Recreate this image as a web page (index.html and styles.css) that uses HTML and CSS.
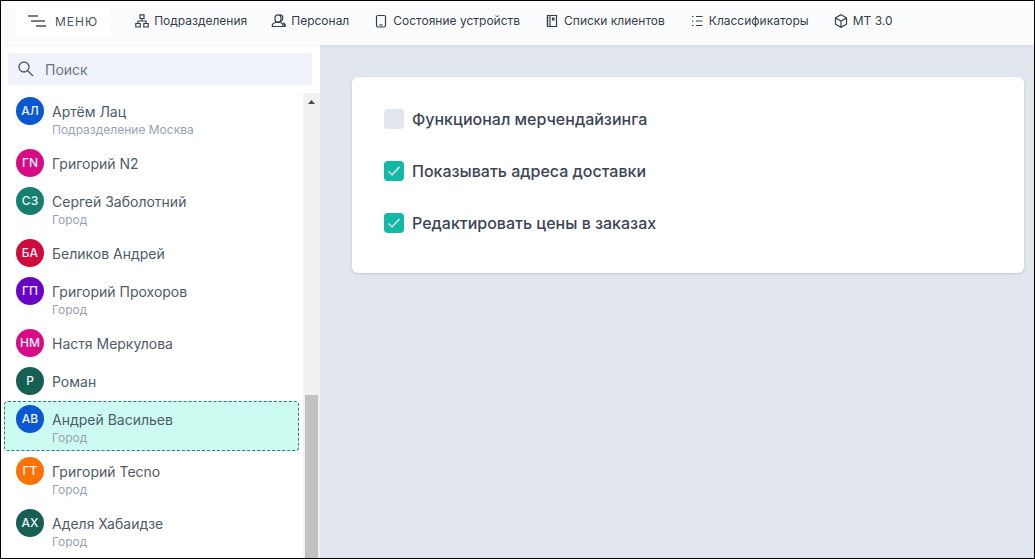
FILE: index.html
```html
<!DOCTYPE html>
<html lang="ru">
<head>
<meta charset="utf-8">
<meta name="viewport" content="width=device-width, initial-scale=1">
<title>Персонал</title>
<link rel="stylesheet" href="styles.css">
</head>
<body class="app">
<header class="topbar">
  <button type="button" class="menu-button">
    <svg class="menu-icon" viewBox="0 0 18 12" aria-hidden="true"><path d="M0 1h10M3 6h14M8 11h10"/></svg>
    <span>МЕНЮ</span>
  </button>
  <nav class="nav">
    <a class="nav-link" href="#"><svg class="icon" viewBox="0 0 16 16" aria-hidden="true"><path d="M6 1.800h4v3.700H6zM1.800 10.500h4.400v3.500H1.800zM9.800 10.500h4.400v3.500H9.800zM8 5.500v2.500M4 10.500V8h8v2.500"/></svg>Подразделения</a>
    <a class="nav-link" href="#"><svg class="icon" viewBox="0 0 16 16" aria-hidden="true"><path d="M4 4.800a3 3 0 0 1 6 0v1.400a3 3 0 0 1-6 0zM1.300 13.500v-1.200c0-1.600 1.500-2.500 3.500-2.800h4c2 .3 3.200 1.200 3.200 2.800v1.200z"/><path d="M8.500 2c2.300-.3 3.300 1 3.300 2.800 0 1.900-.6 3-1.600 3.800"/><path class="solid" d="M11.500 9c2 .5 3.200 1.500 3.200 3v2h-2v-2c0-1.200-.4-2-1.200-3z"/></svg>Персонал</a>
    <a class="nav-link" href="#"><svg class="icon" viewBox="0 0 16 16" aria-hidden="true"><rect x="3.500" y="2.500" width="9" height="11.500" rx="1.500"/><path d="M6.500 12h3"/></svg>Состояние устройств</a>
    <a class="nav-link" href="#"><svg class="icon" viewBox="0 0 16 16" aria-hidden="true"><path d="M3.500 2.500h9v11h-9zM6 2.500v11M2.500 5h2M2.500 8h2M2.500 11h2M8.500 5h1.500v2H8.500z"/></svg>Списки клиентов</a>
    <a class="nav-link" href="#"><svg class="icon" viewBox="0 0 16 16" aria-hidden="true"><path d="M7 3.500h6.500M7 8h6.500M7 12.500h6.500M3 3.500h1.500M3 8h1.500M3 12.500h1.500"/></svg>Классификаторы</a>
    <a class="nav-link" href="#"><svg class="icon" viewBox="0 0 16 16" aria-hidden="true"><path d="M8 1.800l5.500 3v6.400L8 14.200l-5.500-3V4.800zM2.500 5L8 8l5.500-3M8 8v6"/></svg>МТ 3.0</a>
  </nav>
</header>
<div class="body">
  <aside class="sidebar">
    <label class="search">
      <svg class="search-icon" viewBox="0 0 16 16" aria-hidden="true"><circle cx="6" cy="6" r="5"/><path d="M9.700 9.700L15 15"/></svg>
      <input class="search-input" type="search" placeholder="Поиск" aria-label="Поиск">
    </label>
    <div class="list-area">
      <ul class="people">
        <li class="person"><span class="avatar blue">АЛ</span><div class="person-text"><div class="name">Артём Лац</div><div class="unit">Подразделение Москва</div></div></li>
        <li class="person"><span class="avatar pink">ГN</span><div class="person-text"><div class="name">Григорий N2</div></div></li>
        <li class="person"><span class="avatar green">СЗ</span><div class="person-text"><div class="name">Сергей Заболотний</div><div class="unit">Город</div></div></li>
        <li class="person"><span class="avatar red">БА</span><div class="person-text"><div class="name">Беликов Андрей</div></div></li>
        <li class="person"><span class="avatar purple">ГП</span><div class="person-text"><div class="name">Григорий Прохоров</div><div class="unit">Город</div></div></li>
        <li class="person"><span class="avatar pink">НМ</span><div class="person-text"><div class="name">Настя Меркулова</div></div></li>
        <li class="person"><span class="avatar pine">Р</span><div class="person-text"><div class="name">Роман</div></div></li>
        <li class="person selected"><span class="avatar blue">АВ</span><div class="person-text"><div class="name">Андрей Васильев</div><div class="unit">Город</div></div></li>
        <li class="person"><span class="avatar orange">ГТ</span><div class="person-text"><div class="name">Григорий Tecno</div><div class="unit">Город</div></div></li>
        <li class="person"><span class="avatar pine">АХ</span><div class="person-text"><div class="name">Аделя Хабаидзе</div><div class="unit">Город</div></div></li>
      </ul>
      <div class="scrollbar" aria-hidden="true">
        <svg class="scroll-arrow" viewBox="0 0 17 17"><path d="M5 11l3.500-4 3.500 4z"/></svg>
        <div class="scroll-space"></div>
        <div class="scroll-thumb"></div>
      </div>
    </div>
  </aside>
  <main class="content">
    <section class="card">
      <label class="option"><input class="check" type="checkbox">Функционал мерчендайзинга</label>
      <label class="option"><input class="check" type="checkbox" checked>Показывать адреса доставки</label>
      <label class="option"><input class="check" type="checkbox" checked>Редактировать цены в заказах</label>
    </section>
  </main>
</div>
</body>
</html>
```

FILE: styles.css
```css
* { box-sizing: border-box; }

.app {
  margin: 0;
  height: 100vh;
  display: flex;
  flex-direction: column;
  overflow: hidden;
  border: 1px solid #000;
  background: #e1e6ef;
  color: #3d4852;
  font-family: Inter, "Noto Sans", sans-serif;
}

.topbar {
  display: flex;
  align-items: center;
  gap: 24px;
  height: 44px;
  padding: 0 15px 4px;
  background: #fbfcfe;
  white-space: nowrap;
  z-index: 1;
  box-shadow: 0 1px 3px rgb(60 80 110 / 8%);
}

.menu-button {
  display: flex;
  align-items: center;
  gap: 9px;
  height: 30px;
  padding: 0 12px;
  border: 0;
  border-radius: 4px;
  background: #fff;
  color: #4a5561;
  font: 12px Inter, "Noto Sans", sans-serif;
  letter-spacing: 1px;
}

.menu-icon { width: 18px; height: 12px; fill: none; stroke: #4a5561; stroke-width: 1.5; }

.nav { display: flex; gap: 24px; }

.nav-link {
  display: flex;
  align-items: center;
  gap: 4px;
  color: #343d4a;
  font-size: 12px;
  line-height: 20px;
  text-decoration: none;
}

.icon { width: 16px; height: 16px; fill: none; stroke: #343d4a; stroke-width: 1.2; }
.solid { fill: #343d4a; stroke: none; }

.body { flex: 1; min-height: 0; display: flex; }

.sidebar {
  flex: none;
  width: 319px;
  display: flex;
  flex-direction: column;
  gap: 8px;
  padding-top: 8px;
  background: #fff;
}

.search {
  flex: none;
  display: flex;
  align-items: center;
  gap: 11px;
  height: 32px;
  margin: 0 8px 0 7px;
  padding: 0 10px;
  border-radius: 4px;
  background: #f0f3fa;
}

.search-icon { width: 16px; height: 16px; fill: none; stroke: #56616e; stroke-width: 1.4; }

.search-input {
  flex: 1;
  min-width: 0;
  padding: 0;
  border: 0;
  outline: 0;
  background: none;
  color: #3d4852;
  font: 14px Inter, "Noto Sans", sans-serif;
}

.search-input::placeholder { color: #6b7785; opacity: 1; }

.list-area { flex: 1; min-height: 0; display: flex; }

.people {
  flex: 1;
  min-width: 0;
  display: flex;
  flex-direction: column;
  gap: 2px;
  margin: 0;
  padding: 0 4px 0 3px;
  list-style: none;
  overflow: hidden;
}

.person {
  flex: none;
  display: flex;
  align-items: flex-start;
  gap: 8px;
  padding: 3px 11px;
  border: 1px dashed transparent;
  border-radius: 4px;
}

.selected { border-color: #2c7a7b; background: #ccfbf1; }

.avatar {
  flex: none;
  width: 28px;
  height: 28px;
  border-radius: 50%;
  color: #eef4fb;
  font-size: 12px;
  font-weight: 500;
  line-height: 28px;
  text-align: center;
}

.blue { background: #0b57d0; }
.pink { background: #d60b85; }
.green { background: #157f6e; }
.red { background: #cf0a3c; }
.purple { background: #6a04c4; }
.pine { background: #185f53; }
.orange { background: #fb7306; }

.person-text { min-width: 0; }
.name { padding-top: 2px; color: #505b68; font-size: 14px; line-height: 26px; }
.unit { padding-bottom: 4px; color: #98a2b3; font-size: 12px; line-height: 10px; }

.scrollbar {
  flex: none;
  width: 17px;
  display: flex;
  flex-direction: column;
  padding: 0 2px;
  background: #f1f1f1;
}

.scroll-arrow { flex: none; width: 17px; height: 17px; margin: 0 -2px; fill: #4a4a4a; }
.scroll-space { flex: 285; }
.scroll-thumb { flex: 163; background: #c1c1c1; }

.content { flex: 1; min-width: 0; padding: 32px 10px 32px 32px; }

.card {
  display: flex;
  flex-direction: column;
  align-items: flex-start;
  gap: 28px;
  padding: 30px 32px 38px;
  border-radius: 6px;
  background: #fff;
  box-shadow: 0 1px 3px rgb(50 60 90 / 18%);
}

.option {
  display: flex;
  align-items: center;
  gap: 8px;
  color: #3b4454;
  font-size: 16px;
  font-weight: 500;
  line-height: 24px;
}

.check {
  appearance: none;
  flex: none;
  width: 20px;
  height: 20px;
  margin: 0;
  border-radius: 4px;
  background: #e1e6ef;
}

.check:checked {
  background: #14b8a6 url("data:image/svg+xml,%3Csvg xmlns='http://www.w3.org/2000/svg' viewBox='0 0 20 20' fill='none' stroke='white' stroke-width='1.2'%3E%3Cpath d='M4.500 10.500l3.500 3.500 7.500-8'/%3E%3C/svg%3E");
}
```
